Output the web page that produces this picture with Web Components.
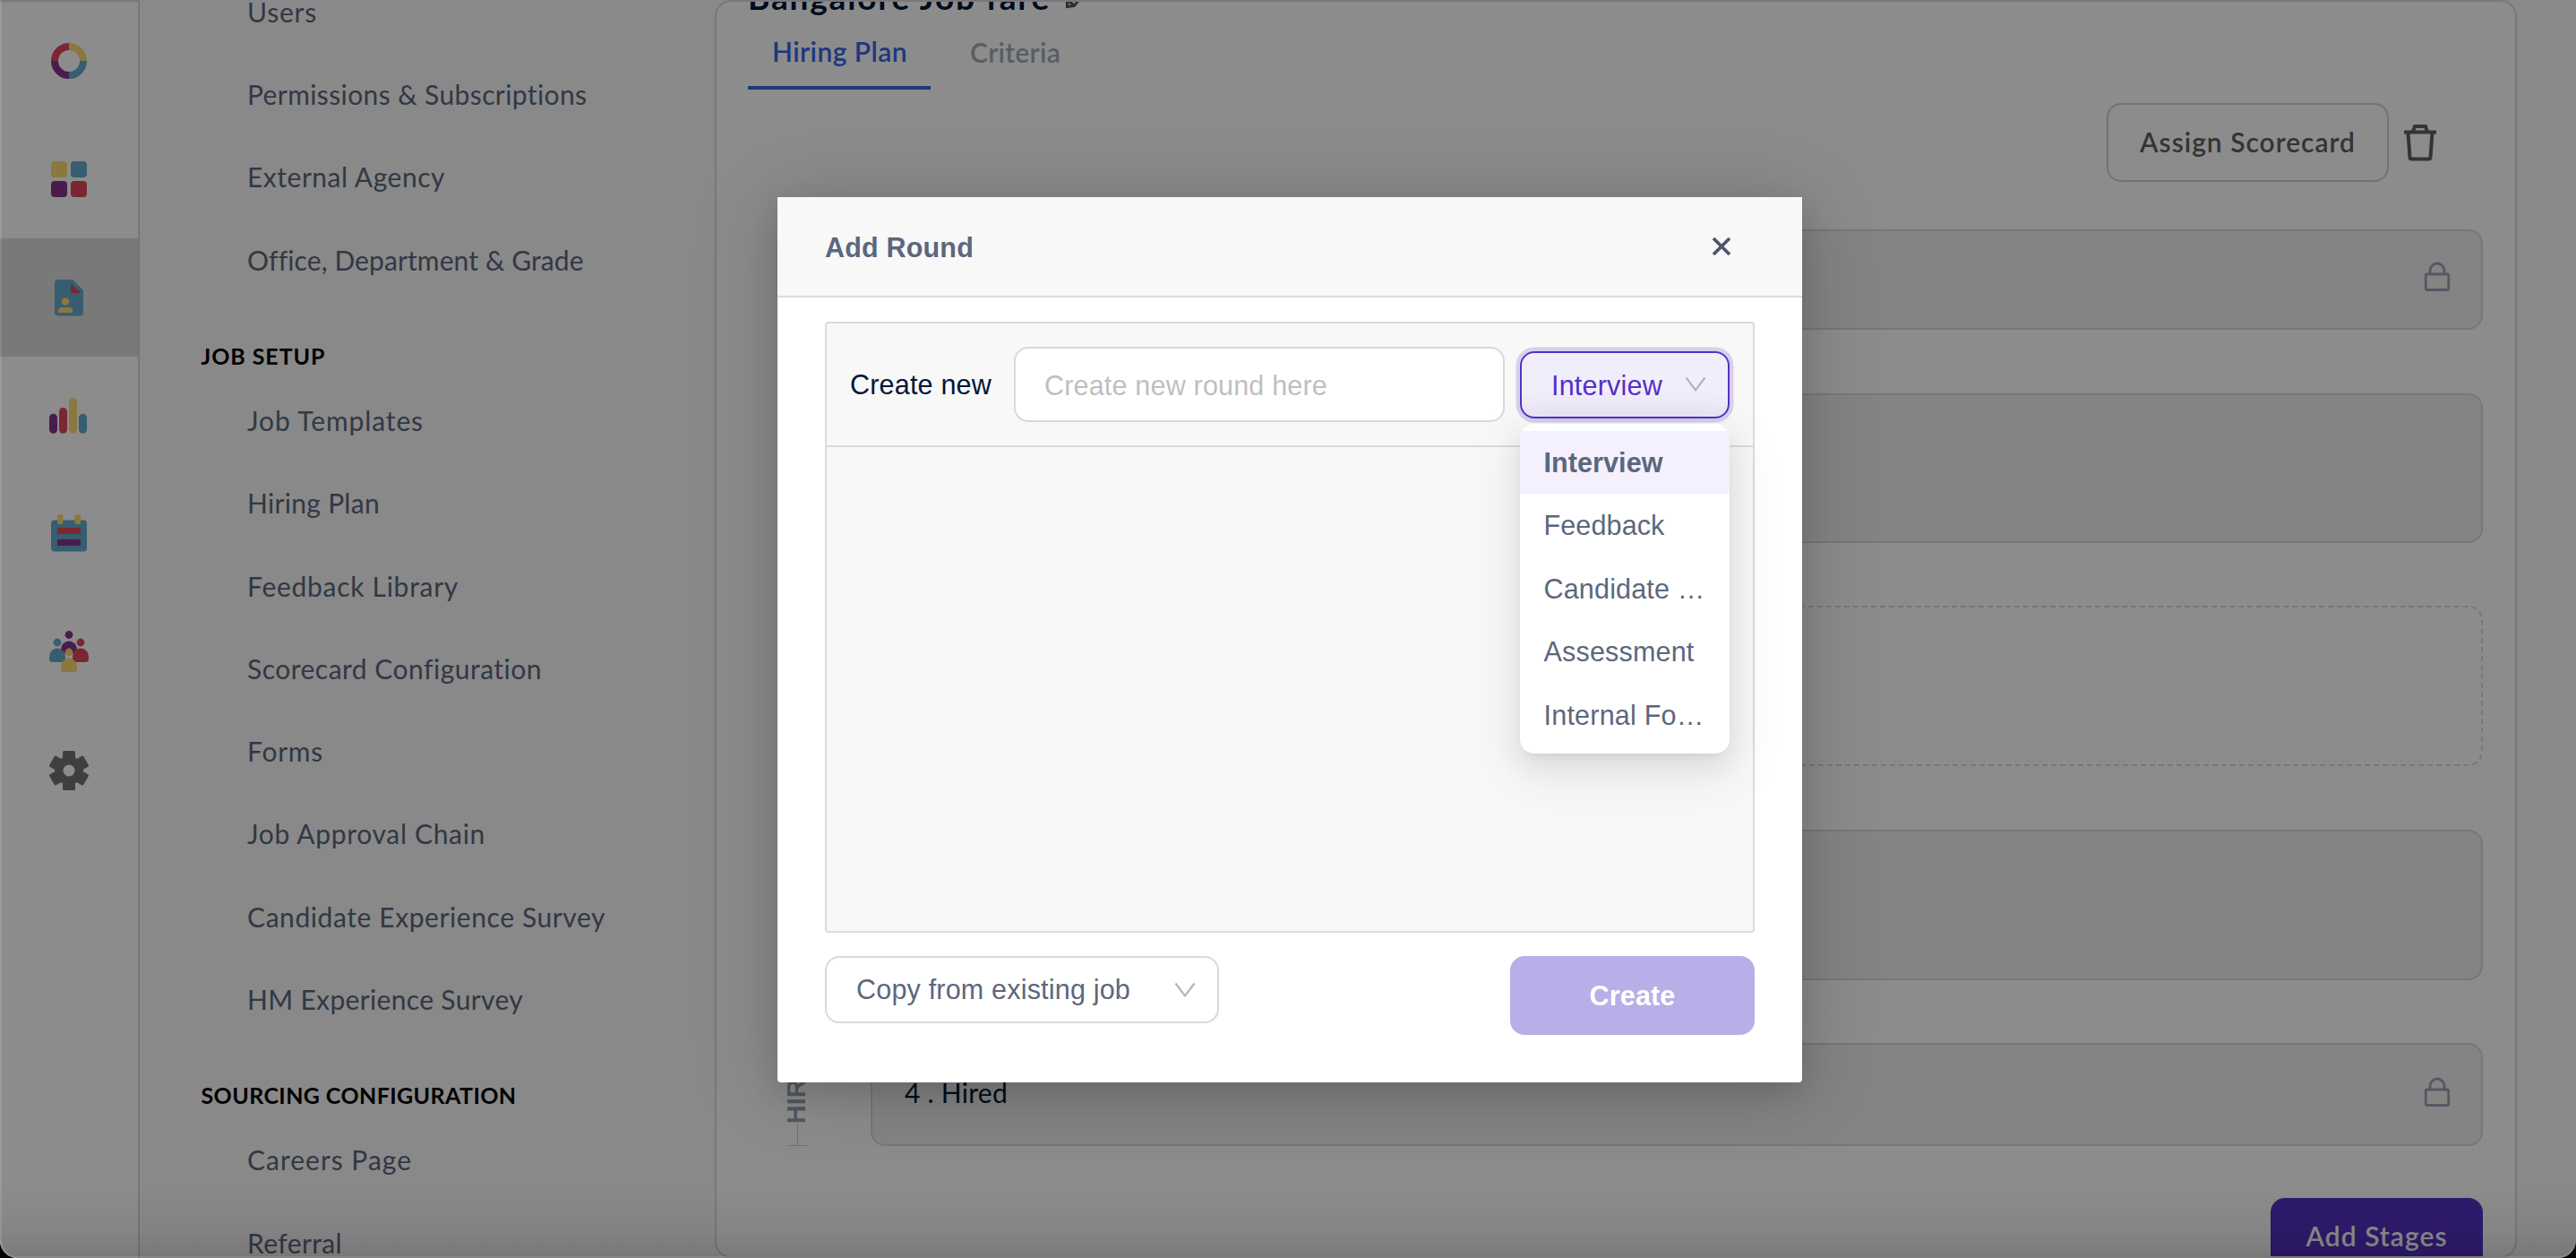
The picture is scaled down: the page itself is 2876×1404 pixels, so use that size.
<!DOCTYPE html>
<html lang="en">
<head>
<meta charset="utf-8">
<title>Hiring Plan</title>
<style>
	html, body {
		margin: 0;
		height: 100%;
		overflow: hidden;
		background: #050505;
	}
	body {
		font-family: "Liberation Sans", Arial, sans-serif;
	}
</style>
</head>
<body>
<app-shell>
	<icon-rail slot="rail"></icon-rail>
	<settings-nav slot="nav"></settings-nav>
	<plan-page slot="page"></plan-page>
	<round-dialog slot="dialog"></round-dialog>
</app-shell>

<script>
class BaseElement extends HTMLElement {
	constructor(){
		super();
		this.attachShadow({mode:"open"});
		this.shadowRoot.innerHTML = this.render();
	}

	render(){
		return "<slot></slot>";
	}
}

// A single line of text whose tracking is adjusted so that it fills `width`
class FitText extends BaseElement {
	render(){
		return `
			<style>
				:host { display: inline-block; white-space: nowrap; }
				span { display: inline-block; }
			</style>
			<span><slot></slot></span>
		`;
	}

	connectedCallback(){
		let width = parseFloat(this.getAttribute("width"));
		let span = this.shadowRoot.querySelector("span");
		let natural = span.getBoundingClientRect().width;
		let count = this.textContent.length;
		if(width && natural){
			span.style.letterSpacing = `${(width-natural)/count}px`;
		}
	}
}
customElements.define("fit-text",FitText);

class AppShell extends BaseElement {
	render(){
		return `
			<style>
				:host {
					display: block;
					position: relative;
					height: 1404px;
					border-radius: 0 0 20px 20px;
					overflow: hidden;
					background: #f9f9f9;
				}
				.columns {
					display: grid;
					grid-template-columns: 156px 642px 2012px 1fr;
					height: 100%;
				}
				.mask {
					position: absolute;
					inset: 0;
					background: rgba(0,0,0,0.45);
				}
				.dialog {
					position: absolute;
					inset: 0;
					display: flex;
					justify-content: center;
					align-items: flex-start;
					padding: 220px 0 0 4px;
					box-sizing: border-box;
				}
				.edge {
					position: absolute;
					inset: 0;
					border-radius: 0 0 20px 20px;
					background: linear-gradient(to top, rgba(0,0,0,0.13), rgba(0,0,0,0.05) 30px, transparent 80px);
					box-shadow: inset 2px 0 0 rgba(255,255,255,0.12), inset 0 -2px 0 rgba(255,255,255,0.12);
				}
			</style>
			<div class="columns">
				<slot name="rail"></slot>
				<slot name="nav"></slot>
				<slot name="page"></slot>
			</div>
			<div class="mask"></div>
			<div class="edge"></div>
			<div class="dialog"><slot name="dialog"></slot></div>
		`;
	}
}
customElements.define("app-shell",AppShell);

const YELLOW = "#fbda72";
const BLUE = "#65aacd";
const RED = "#de475c";
const PURPLE = "#863389";

const RAIL_ICONS = [
	`<g fill="none" stroke-width="8">
		<path d="M8 24A16 16 0 0 1 24 8" stroke="${RED}"/>
		<path d="M24 8A16 16 0 0 1 40 24" stroke="${YELLOW}"/>
		<path d="M40 24A16 16 0 0 1 24 40" stroke="${BLUE}"/>
		<path d="M24 40A16 16 0 0 1 8 24" stroke="${PURPLE}"/>
	</g>`,
	`<rect x="4" y="4" width="18" height="18" rx="4" fill="${YELLOW}"/>
	<rect x="26" y="4" width="18" height="18" rx="4" fill="${BLUE}"/>
	<rect x="4" y="26" width="18" height="18" rx="4" fill="${PURPLE}"/>
	<rect x="26" y="26" width="18" height="18" rx="4" fill="${RED}"/>`,
	`<path d="M12 4H28L40 16V40.500a4 4 0 0 1-4 4H12a4 4 0 0 1-4-4V8a4 4 0 0 1 4-4Z" fill="${BLUE}"/>
	<path d="M26 8.500V19H37Z" fill="${RED}"/>
	<circle cx="20" cy="28.500" r="4.200" fill="${YELLOW}"/>
	<path d="M12 41v-2.500a3.500 3.500 0 0 1 3.500-3.500h9a3.500 3.500 0 0 1 3.500 3.500V41Z" fill="${YELLOW}"/>`,
	`<rect x="2" y="21.700" width="9" height="22" rx="4.500" fill="${PURPLE}"/>
	<rect x="13" y="15" width="9" height="28.700" rx="4.500" fill="${RED}"/>
	<rect x="24" y="4" width="9" height="39.700" rx="4.500" fill="${YELLOW}"/>
	<rect x="35" y="21.700" width="9" height="22" rx="4.500" fill="${BLUE}"/>`,
	`<rect x="4" y="8.500" width="40" height="35" rx="4" fill="${BLUE}"/>
	<rect x="11" y="2" width="6.500" height="11" rx="2" fill="${YELLOW}"/>
	<rect x="30.500" y="2" width="6.500" height="11" rx="2" fill="${YELLOW}"/>
	<rect x="11" y="17" width="26" height="7" rx="1" fill="${RED}"/>
	<rect x="11" y="30" width="26" height="7" rx="1" fill="${PURPLE}"/>`,
	`<circle cx="24" cy="4.500" r="4.400" fill="${PURPLE}"/>
	<path d="M15 21a9 9.500 0 0 1 18 0L28 26H20Z" fill="${PURPLE}"/>
	<circle cx="11" cy="13" r="4.400" fill="${BLUE}"/>
	<path d="M2 29a9 9.500 0 0 1 18 0v2.500a3.500 3.500 0 0 1-3.500 3.500h-11a3.500 3.500 0 0 1-3.500-3.500Z" fill="${BLUE}"/>
	<circle cx="37" cy="13" r="4.400" fill="${RED}"/>
	<path d="M28 29a9 9.500 0 0 1 18 0v2.500a3.500 3.500 0 0 1-3.500 3.500h-11a3.500 3.500 0 0 1-3.500-3.500Z" fill="${RED}"/>
	<circle cx="24" cy="24" r="4.400" fill="${YELLOW}"/>
	<path d="M15 40a9 9.500 0 0 1 18 0v2.500a3.500 3.500 0 0 1-3.500 3.500h-11a3.500 3.500 0 0 1-3.500-3.500Z" fill="${YELLOW}"/>`,
	`<defs><mask id="hole"><rect width="48" height="48" fill="#fff"/><circle cx="24" cy="24" r="6.500" fill="#000"/></mask></defs>
	<g mask="url(#hole)" fill="#747474">
		<circle cx="24" cy="24" r="16"/>
		<rect x="17" y="2" width="14" height="44" rx="1.500"/>
		<rect x="17" y="2" width="14" height="44" rx="1.500" transform="rotate(60 24 24)"/>
		<rect x="17" y="2" width="14" height="44" rx="1.500" transform="rotate(120 24 24)"/>
	</g>`,
];

class IconRail extends BaseElement {
	render(){
		return `
			<style>
				:host {
					display: block;
					box-sizing: border-box;
					border-top: 2px solid #dcdcdc;
					border-right: 2px solid #d8d8d8;
					background: #fff;
				}
				div {
					display: flex;
					align-items: center;
					justify-content: center;
					height: 132px;
				}
				.active { background: #dcdcdc; }
				svg { width: 48px; height: 48px; overflow: visible; }
			</style>
			${RAIL_ICONS.map((icon,i) => `<div class="${i === 2 ? "active" : ""}"><svg viewBox="0 0 48 48">${icon}</svg></div>`).join("")}
		`;
	}
}
customElements.define("icon-rail",IconRail);

// [label, width, starts a group]
const NAV = [
	["Users",78],
	["Permissions & Subscriptions",380],
	["External Agency",221],
	["Office, Department & Grade",374],
	["JOB SETUP",139,true],
	["Job Templates",197],
	["Hiring Plan",148],
	["Feedback Library",236],
	["Scorecard Configuration",329],
	["Forms",85],
	["Job Approval Chain",266],
	["Candidate Experience Survey",400],
	["HM Experience Survey",308],
	["SOURCING CONFIGURATION",352,true],
	["Careers Page",184],
	["Referral",106],
];

class SettingsNav extends BaseElement {
	render(){
		return `
			<style>
				:host {
					display: block;
					overflow: hidden;
					font-family: Lato, sans-serif;
					background: #f9f9f9;
				}
				nav { margin-top: -33.4px; }
				.item {
					display: flex;
					align-items: center;
					height: 92.3px;
					padding-left: 120px;
					font-size: 30px;
					color: #5c677d;
				}
				.group {
					display: flex;
					align-items: center;
					height: 52px;
					padding: 35px 0 0 68.5px;
					font-size: 25px;
					font-weight: 700;
					color: #000;
				}
			</style>
			<nav>
				${NAV.map(([label,width,group]) => `<div class="${group ? "group" : "item"}"><fit-text width="${width}">${label.replace("&","&amp;")}</fit-text></div>`).join("")}
			</nav>
		`;
	}
}
customElements.define("settings-nav",SettingsNav);

class StageRow extends BaseElement {
	render(){
		return `
			<style>
				:host {
					display: grid;
					grid-template-columns: 137px 1fr;
				}
				.rail {
					display: flex;
					flex-direction: column;
					align-items: center;
					justify-content: flex-end;
					width: 22px;
					margin-left: 44px;
					font: 700 29px/30px "Liberation Sans", sans-serif;
					color: #98a1b3;
				}
				.rail span {
					writing-mode: vertical-rl;
					transform: rotate(180deg);
					margin-right: 3px;
				}
				.line { width: 1px; height: 24px; background: #d0d0d4; }
				.cap { width: 22px; height: 1px; background: #d0d0d4; }
				.card {
					display: flex;
					align-items: center;
					justify-content: space-between;
					box-sizing: border-box;
					padding: 0 36px 5px;
					border: 2px solid #d9d9df;
					border-radius: 16px;
					background: #f0f0f0;
					font-size: 30px;
					color: #011638;
				}
				:host([dashed]) .card {
					border-style: dashed;
					background: none;
				}
				svg { display: none; width: 30px; height: 34px; margin: 0 -2px 1px auto; }
				:host([locked]) svg { display: block; }
				:host(:not([label])) .rail { visibility: hidden; }
			</style>
			<div class="rail"><span id="label"></span><div class="line"></div><div class="cap"></div></div>
			<div class="card">
				<slot></slot>
				<svg viewBox="0 0 30 34" fill="none" stroke="#98a1b3" stroke-width="2.800">
					<rect x="2.300" y="14" width="25.400" height="17.500" rx="1.500"/>
					<path d="M7 14V10.500a8 8.500 0 0 1 16 0V14"/>
				</svg>
			</div>
		`;
	}

	connectedCallback(){
		this.shadowRoot.querySelector("#label").textContent = this.getAttribute("label") || "";
	}
}
customElements.define("stage-row",StageRow);

class PlanPage extends BaseElement {
	render(){
		return `
			<style>
				:host {
					display: block;
					box-sizing: border-box;
					height: 1404px;
					overflow: hidden;
					border: 2px solid #dadae0;
					border-radius: 18px;
					background: #fff;
					padding: 0 36px 0 35px;
					font-family: Lato, sans-serif;
				}
				h1 {
					display: flex;
					align-items: center;
					gap: 15px;
					height: 40px;
					margin: -26px 0 1px;
					font-size: 37px;
					font-weight: 700;
					color: #011638;
				}
				h1 svg { width: 24px; height: 26px; margin-top: 5px; }
				.tabs {
					display: flex;
					height: 83px;
					font-size: 30px;
					font-weight: 600;
				}
				.tab {
					box-sizing: border-box;
					height: 83px;
					padding: 23px 26px 0 27px;
					line-height: 34px;
					color: #a3a9b6;
				}
				.tab.active {
					width: 204px;
					border-bottom: 4px solid #3667e6;
					color: #3667e6;
				}
				.tab + .tab { padding: 24px 0 0 44px; }
				.tools {
					display: flex;
					justify-content: flex-end;
					align-items: center;
					gap: 15px;
					margin-top: 15px;
					padding-right: 50px;
				}
				.outline {
					box-sizing: border-box;
					width: 315px;
					height: 88px;
					border: 2px solid #d2d2d2;
					border-radius: 16px;
					font-size: 30px;
					line-height: 82px;
					text-align: center;
					font-weight: 600;
					color: #606060;
				}
				.tools svg { width: 40px; height: 44px; }
				.stages {
					display: grid;
					grid-template-rows: 112px 167px 179px 168px 112px;
					row-gap: 70.500px;
					margin-top: 53px;
				}
				.add {
					width: 237px;
					height: 88px;
					margin: 61px 0 0 auto;
					border-radius: 16px;
					background: #5530c5;
					color: #fff;
					font-size: 30px;
					line-height: 85px;
					text-align: center;
					font-weight: 600;
				}
			</style>
			<h1>
				<fit-text width="338">Bangalore Job fare</fit-text>
				<svg viewBox="0 0 24 26" fill="none" stroke="#555" stroke-width="3"><path d="M3.500 21.500V12L14 2L21 9L11 20.500ZM4 14L11 20"/></svg>
			</h1>
			<div class="tabs">
				<div class="tab active"><fit-text width="151">Hiring Plan</fit-text></div>
				<div class="tab"><fit-text width="101">Criteria</fit-text></div>
			</div>
			<div class="tools">
				<div class="outline"><fit-text width="241">Assign Scorecard</fit-text></div>
				<svg viewBox="0 0 40 44" fill="none" stroke="#606060" stroke-width="4">
					<path d="M2 10.500H38"/>
					<path d="M12 10L14 4H26L28 10"/>
					<path d="M6.500 11L8.500 38.500a2 2 0 0 0 2 2h19a2 2 0 0 0 2-2L33.500 11"/>
				</svg>
			</div>
			<div class="stages">
				<stage-row locked></stage-row>
				<stage-row></stage-row>
				<stage-row dashed></stage-row>
				<stage-row></stage-row>
				<stage-row label="HIRED" locked><fit-text width="115">4 . Hired</fit-text></stage-row>
			</div>
			<div class="add"><fit-text width="158">Add Stages</fit-text></div>
		`;
	}
}
customElements.define("plan-page",PlanPage);

class SelectBox extends BaseElement {
	render(){
		return `
			<style>
				:host {
					display: flex;
					align-items: center;
					justify-content: space-between;
					box-sizing: border-box;
					height: 75px;
					padding: 0 24px 0 33px;
					border: 2px solid #d9d9d9;
					border-radius: 16px;
					background: #fff;
					color: #5c677d;
					position: relative;
				}
				:host([open]) {
					border-color: #5530c5;
					background: linear-gradient(#f1eefc 60%, #e9e5f6);
					box-shadow: 0 0 0 4.500px rgba(85,48,197,0.2);
					color: #5530c5;
				}
				svg { width: 24px; height: 18px; }
				::slotted(option-menu) {
					position: absolute;
					top: 79px;
					left: -2px;
				}
			</style>
			<slot></slot>
			<svg viewBox="0 0 24 18" fill="none" stroke="#b5b5bb" stroke-width="2.200"><path d="M1.500 1.500L12 15.500L22.500 1.500"/></svg>
			<slot name="menu"></slot>
		`;
	}
}
customElements.define("select-box",SelectBox);

class OptionMenu extends BaseElement {
	render(){
		return `
			<style>
				:host {
					display: block;
					box-sizing: border-box;
					width: 234px;
					padding: 8px 0;
					border-radius: 16px;
					background: #fff;
					box-shadow: 0 6px 12px -8px rgba(0,0,0,0.12), 0 12px 32px rgba(0,0,0,0.09), 0 18px 56px 16px rgba(0,0,0,0.05);
					color: #5c677d;
				}
				div {
					box-sizing: border-box;
					height: 70.6px;
					padding: 0 0 0 26.5px;
					line-height: 71.5px;
				}
				.selected {
					background: #f4f0fe;
					font-weight: 700;
				}
			</style>
			<div class="selected"><fit-text width="133">Interview</fit-text></div>
			<div><fit-text width="135">Feedback</fit-text></div>
			<div><fit-text width="180">Candidate …</fit-text></div>
			<div><fit-text width="168">Assessment</fit-text></div>
			<div><fit-text width="179">Internal Fo…</fit-text></div>
		`;
	}
}
customElements.define("option-menu",OptionMenu);

class RoundDialog extends BaseElement {
	render(){
		return `
			<style>
				:host {
					display: block;
					width: 1144px;
					height: 988px;
					border-radius: 0 0 4px 4px;
					background: #fff;
					box-shadow: 0 12px 32px rgba(0,0,0,0.12), 0 8px 90px 10px rgba(0,0,0,0.14);
					font-size: 30.5px;
					color: #5c677d;
				}
				header {
					display: flex;
					align-items: center;
					justify-content: space-between;
					box-sizing: border-box;
					height: 112px;
					padding: 0 79px 0 53px;
					border-bottom: 2px solid #dadae0;
					background: #f8f8f8;
					font-weight: 700;
				}
				header fit-text { padding-top: 2px; }
				header svg { width: 22px; height: 22px; }
				.panel {
					box-sizing: border-box;
					height: 682px;
					margin: 27px 53px 0;
					border: 2px solid #dadae0;
					border-radius: 4px;
					background: #f8f8f8;
				}
				.row {
					display: flex;
					align-items: center;
					box-sizing: border-box;
					height: 138px;
					padding: 0 26px;
					border-bottom: 2px solid #dadae0;
					color: #011638;
				}
				.row > fit-text { padding-top: 1px; }
				.input {
					box-sizing: border-box;
					width: 548px;
					height: 84px;
					margin: 0 17px 0 25px;
					padding-left: 32px;
					border: 2px solid #d9d9d9;
					border-radius: 16px;
					background: #fff;
					line-height: 82px;
					color: #bfbfbf;
				}
				.row select-box { width: 234px; }
				.row select-box > fit-text { padding-top: 2px; }
				footer {
					display: flex;
					justify-content: space-between;
					align-items: flex-start;
					padding: 26px 53px 0;
				}
				footer select-box { width: 440px; }
				.create {
					width: 273px;
					height: 88px;
					border-radius: 16px;
					background: #b9aee7;
					color: #fff;
					font-weight: 700;
					line-height: 88px;
					text-align: center;
				}
			</style>
			<header>
				<fit-text width="166">Add Round</fit-text>
				<svg viewBox="0 0 22 22" stroke="#4b566c" stroke-width="3.800"><path d="M2 2L20 20M20 2L2 20"/></svg>
			</header>
			<div class="panel">
				<div class="row">
					<fit-text width="158">Create new</fit-text>
					<div class="input"><fit-text width="316">Create new round here</fit-text></div>
					<select-box open>
						<fit-text width="124">Interview</fit-text>
						<option-menu slot="menu"></option-menu>
					</select-box>
				</div>
			</div>
			<footer>
				<select-box><fit-text width="306">Copy from existing job</fit-text></select-box>
				<div class="create"><fit-text width="96">Create</fit-text></div>
			</footer>
		`;
	}
}
customElements.define("round-dialog",RoundDialog);
</script>
</body>
</html>
